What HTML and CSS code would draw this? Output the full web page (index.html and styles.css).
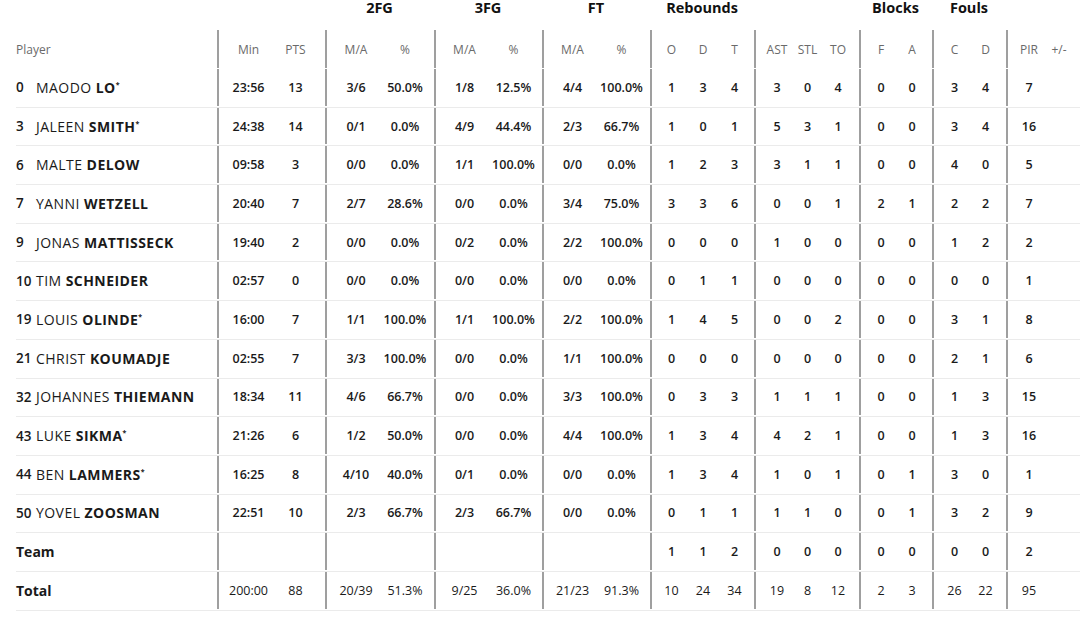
FILE: index.html
```html
<!DOCTYPE html>
<html>
<head>
<meta charset="utf-8">
<link rel="stylesheet" href="styles.css">
</head>
<body>
<div class="box">
  <div class="row groups">
    <div class="g first"></div>
    <div class="g"></div>
    <div class="g">2FG</div>
    <div class="g">3FG</div>
    <div class="g">FT</div>
    <div class="g">Rebounds</div>
    <div class="g"></div>
    <div class="g">Blocks</div>
    <div class="g">Fouls</div>
    <div class="g"></div>
  </div>
  <div class="row head">
    <div class="g first">Player</div>
    <div class="g mp"><span class="c">Min</span><span class="c">PTS</span></div>
    <div class="g fg"><span class="c">M/A</span><span class="c">%</span></div>
    <div class="g fg"><span class="c">M/A</span><span class="c">%</span></div>
    <div class="g fg"><span class="c">M/A</span><span class="c">%</span></div>
    <div class="g rb"><span class="c">O</span><span class="c">D</span><span class="c">T</span></div>
    <div class="g as"><span class="c">AST</span><span class="c">STL</span><span class="c">TO</span></div>
    <div class="g bl"><span class="c">F</span><span class="c">A</span></div>
    <div class="g bl"><span class="c">C</span><span class="c">D</span></div>
    <div class="g pr"><span class="c">PIR</span><span class="c">+/-</span></div>
  </div>
  <div id="body"></div>
</div>
<script src="app.js"></script>
</body>
</html>
```

FILE: app.js
```js
const rows = [
  ["0","MAODO","LO",true,"23:56","13","3/6","50.0%","1/8","12.5%","4/4","100.0%","1","3","4","3","0","4","0","0","3","4","7"],
  ["3","JALEEN","SMITH",true,"24:38","14","0/1","0.0%","4/9","44.4%","2/3","66.7%","1","0","1","5","3","1","0","0","3","4","16"],
  ["6","MALTE","DELOW",false,"09:58","3","0/0","0.0%","1/1","100.0%","0/0","0.0%","1","2","3","3","1","1","0","0","4","0","5"],
  ["7","YANNI","WETZELL",false,"20:40","7","2/7","28.6%","0/0","0.0%","3/4","75.0%","3","3","6","0","0","1","2","1","2","2","7"],
  ["9","JONAS","MATTISSECK",false,"19:40","2","0/0","0.0%","0/2","0.0%","2/2","100.0%","0","0","0","1","0","0","0","0","1","2","2"],
  ["10","TIM","SCHNEIDER",false,"02:57","0","0/0","0.0%","0/0","0.0%","0/0","0.0%","0","1","1","0","0","0","0","0","0","0","1"],
  ["19","LOUIS","OLINDE",true,"16:00","7","1/1","100.0%","1/1","100.0%","2/2","100.0%","1","4","5","0","0","2","0","0","3","1","8"],
  ["21","CHRIST","KOUMADJE",false,"02:55","7","3/3","100.0%","0/0","0.0%","1/1","100.0%","0","0","0","0","0","0","0","0","2","1","6"],
  ["32","JOHANNES","THIEMANN",false,"18:34","11","4/6","66.7%","0/0","0.0%","3/3","100.0%","0","3","3","1","1","1","0","0","1","3","15"],
  ["43","LUKE","SIKMA",true,"21:26","6","1/2","50.0%","0/0","0.0%","4/4","100.0%","1","3","4","4","2","1","0","0","1","3","16"],
  ["44","BEN","LAMMERS",true,"16:25","8","4/10","40.0%","0/1","0.0%","0/0","0.0%","1","3","4","1","0","1","0","1","3","0","1"],
  ["50","YOVEL","ZOOSMAN",false,"22:51","10","2/3","66.7%","2/3","66.7%","0/0","0.0%","0","1","1","1","1","0","0","1","3","2","9"],
  ["","Team","",false,"","","","","","","","","1","1","2","0","0","0","0","0","0","0","2"],
  ["","Total","",false,"200:00","88","20/39","51.3%","9/25","36.0%","21/23","91.3%","10","24","34","19","8","12","2","3","26","22","95"]
];
const groups = [["mp",2],["fg",2],["fg",2],["fg",2],["rb",3],["as",3],["bl",2],["bl",2],["pr",1]];
const body = document.getElementById("body");
rows.forEach(r => {
  const row = document.createElement("div");
  const isTeam = r[0] === "";
  row.className = "row data" + (r[1] === "Total" ? " total" : "");
  let player;
  if (isTeam) {
    player = `<div class="g first"><span class="team">${r[1]}</span></div>`;
  } else {
    player = `<div class="g first"><span class="num">${r[0]}</span><span class="name">${r[1]} <b>${r[2]}</b>${r[3] ? '<sup>*</sup>' : ''}</span></div>`;
  }
  let html = player;
  let i = 4;
  groups.forEach(([cls, n]) => {
    let inner = "";
    for (let k = 0; k < n; k++) { inner += `<span class="c">${r[i++]}</span>`; }
    if (cls === "pr") inner += `<span class="c"></span>`;
    html += `<div class="g ${cls}">${inner}</div>`;
  });
  row.innerHTML = html;
  body.appendChild(row);
});
```

FILE: styles.css
```css
html, body {
  margin: 0;
  padding: 0;
  background: #fff;
}
body {
  font-family: "Open Sans", "Liberation Sans", sans-serif;
  color: #1a1a1a;
}
.box {
  padding-left: 16px;
  width: 1064px;
}
.row {
  display: grid;
  grid-template-columns: 201px 108px 109px 108px 108px 104px 105px 73px 74px 74px;
  box-sizing: border-box;
}
.g {
  display: flex;
  justify-content: center;
  align-items: center;
  border-left: 2px solid #9f9f9f;
}
.g.first {
  border-left: none;
  justify-content: flex-start;
}
.groups {
  height: 30px;
}
.groups .g {
  border-left: none;
  align-items: flex-start;
  font-size: 14.5px;
  font-weight: 700;
  line-height: 15px;
  color: #111;
}
.head {
  height: 39px;
  padding-bottom: 1px;
  font-size: 12px;
  color: #6a6a6a;
}
.data {
  height: 38.7px;
  border-bottom: 1px solid #ebebeb;
  padding-bottom: 1px;
  font-size: 12.5px;
  font-weight: 600;
}
.c {
  text-align: center;
  flex: none;
}
.mp .c { width: 47px; }
.fg .c { width: 49px; }
.rb .c { width: 31.5px; }
.as .c { width: 30.5px; }
.bl .c { width: 31px; }
.pr .c { width: 30px; }
.num {
  width: 20px;
  font-size: 13.5px;
  font-weight: 600;
}
.name {
  font-size: 14px;
  font-weight: 400;
  letter-spacing: 0.45px;
}
.name b {
  font-weight: 700;
}
.name sup {
  font-size: 7px;
  font-weight: 700;
  vertical-align: 6px;
  line-height: 0;
  letter-spacing: 0;
}
.team {
  font-size: 14px;
  font-weight: 700;
}
.total .c {
  font-weight: 400;
}
```
